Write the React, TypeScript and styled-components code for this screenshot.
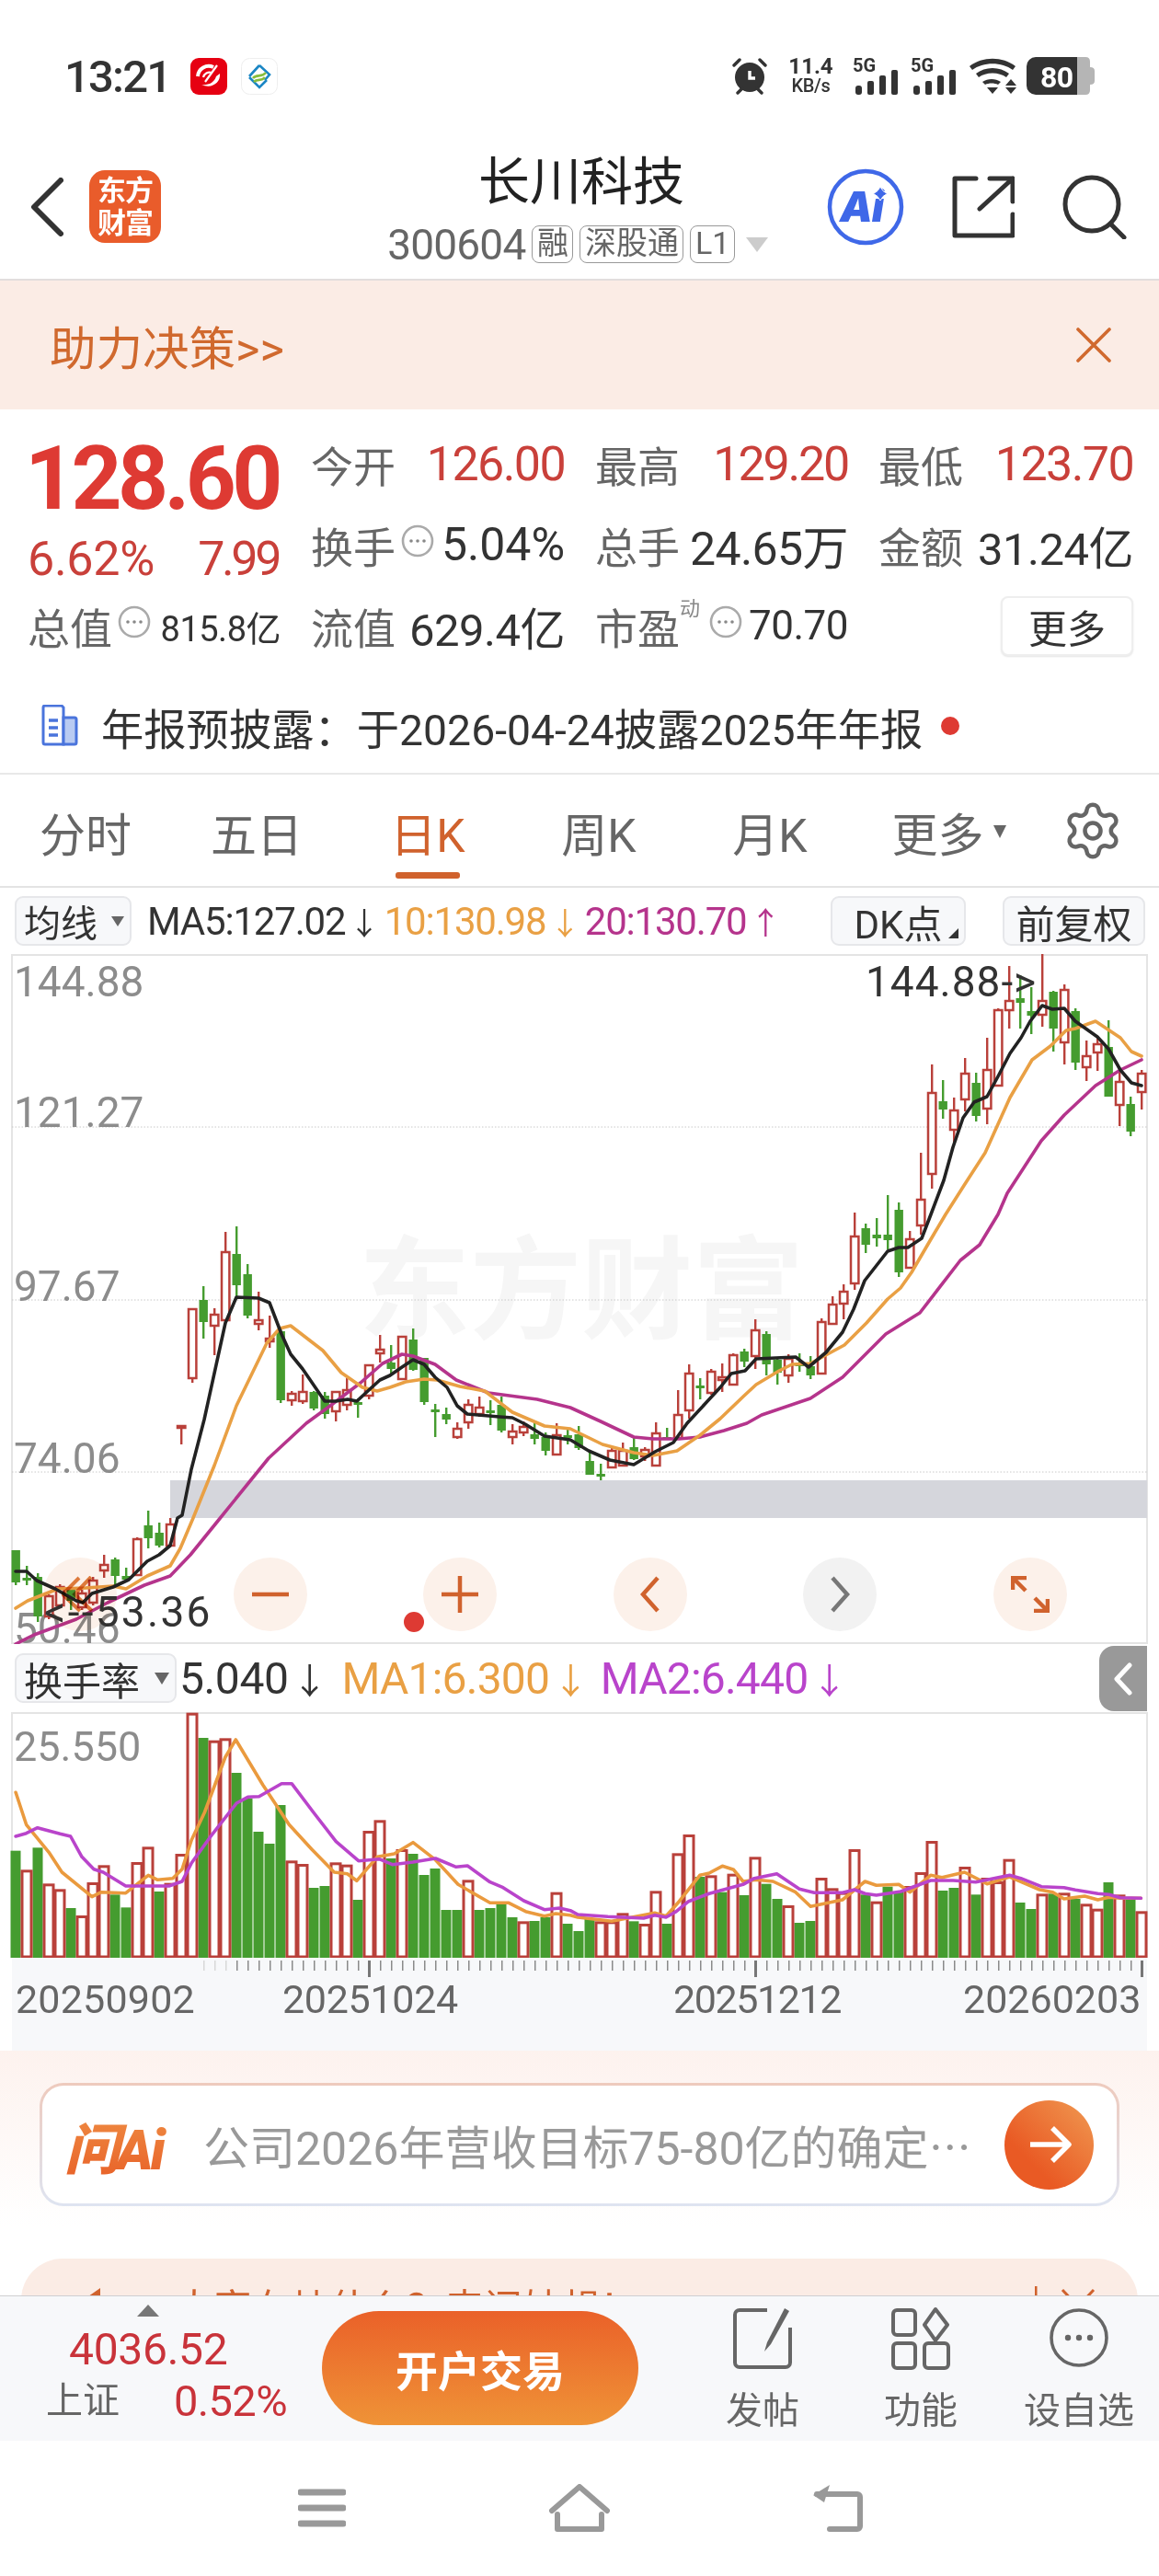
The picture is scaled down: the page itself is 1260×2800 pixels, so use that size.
import React from "react";
import styled, { createGlobalStyle } from "styled-components";
import { Settings } from "lucide-react";

const FONT = `Roboto, "Noto Sans CJK SC", sans-serif`;

const Global = createGlobalStyle`
  html, body { margin: 0; padding: 0; background: #fff; }
  * { box-sizing: border-box; }
`;

/* ---------- chart data: body top, body bottom, wick top, wick bottom (page px), colour ---------- */
type C = [number, number, number, number, "r" | "g"];
const candles: C[] = [
  [1685,1720,1685,1723,"g"],[1715,1718,1702,1723,"g"],[1714,1757,1710,1763,"g"],[1735,1757,1733,1760,"r"],
  [1725,1745,1722,1748,"r"],[1728,1740,1725,1750,"g"],[1732,1747,1728,1750,"r"],[1718,1742,1714,1745,"r"],
  [1701,1707,1690,1715,"r"],[1695,1713,1693,1723,"g"],[1713,1717,1704,1717,"g"],[1673,1712,1671,1712,"r"],
  [1658,1672,1642,1683,"g"],[1666,1680,1655,1682,"g"],[1657,1680,1650,1680,"r"],[1550,1552,1550,1570,"r"],
  [1423,1498,1423,1503,"r"],[1413,1437,1398,1455,"g"],[1429,1441,1422,1473,"r"],[1361,1435,1339,1435,"r"],
  [1363,1397,1333,1410,"g"],[1385,1430,1374,1433,"g"],[1435,1439,1404,1446,"r"],[1455,1458,1430,1465,"r"],
  [1447,1522,1445,1525,"g"],[1515,1522,1512,1528,"r"],[1513,1523,1494,1526,"r"],[1513,1531,1512,1533,"g"],
  [1517,1537,1513,1542,"g"],[1513,1534,1512,1545,"r"],[1511,1527,1498,1533,"r"],[1524,1526,1520,1541,"g"],
  [1484,1517,1484,1521,"r"],[1467,1471,1451,1481,"r"],[1481,1488,1462,1493,"g"],[1453,1499,1453,1499,"r"],
  [1456,1489,1444,1490,"g"],[1476,1524,1476,1527,"g"],[1532,1534,1526,1562,"g"],[1537,1543,1530,1548,"g"],
  [1553,1562,1546,1564,"r"],[1527,1546,1521,1553,"r"],[1530,1537,1518,1540,"r"],[1533,1536,1522,1549,"g"],
  [1527,1555,1518,1557,"g"],[1556,1562,1548,1570,"r"],[1551,1557,1545,1561,"r"],[1559,1564,1547,1570,"g"],
  [1562,1577,1557,1582,"g"],[1560,1581,1547,1581,"r"],[1560,1563,1552,1570,"g"],[1559,1574,1550,1576,"g"],
  [1588,1603,1577,1603,"g"],[1602,1604,1591,1609,"g"],[1577,1595,1574,1595,"r"],[1577,1593,1568,1593,"r"],
  [1573,1586,1563,1587,"g"],[1576,1583,1573,1588,"r"],[1558,1593,1546,1593,"r"],[1562,1564,1552,1565,"g"],
  [1538,1563,1511,1563,"r"],[1493,1533,1483,1542,"r"],[1506,1508,1498,1521,"g"],[1491,1514,1488,1516,"r"],
  [1497,1500,1482,1513,"r"],[1473,1505,1471,1505,"r"],[1469,1480,1466,1486,"g"],[1446,1474,1434,1488,"r"],
  [1450,1483,1447,1495,"g"],[1478,1492,1477,1505,"g"],[1477,1495,1472,1503,"r"],[1482,1484,1471,1491,"g"],
  [1485,1495,1474,1499,"g"],[1437,1493,1433,1493,"r"],[1418,1439,1409,1439,"r"],[1404,1417,1396,1434,"r"],
  [1344,1395,1318,1402,"r"],[1335,1353,1330,1362,"g"],[1342,1346,1324,1355,"g"],[1342,1348,1299,1358,"g"],
  [1315,1383,1307,1388,"g"],[1347,1378,1338,1378,"r"],[1304,1332,1253,1342,"r"],[1188,1276,1157,1292,"r"],
  [1197,1206,1174,1216,"g"],[1207,1228,1193,1243,"r"],[1167,1195,1150,1208,"r"],[1177,1213,1166,1219,"g"],
  [1163,1205,1128,1222,"r"],[1098,1180,1096,1180,"r"],[1088,1098,1050,1118,"r"],[1085,1090,1060,1118,"g"],
  [1099,1104,1073,1124,"g"],[1088,1103,1037,1116,"r"],[1078,1118,1077,1143,"g"],[1076,1133,1070,1157,"r"],
  [1099,1155,1096,1163,"g"],[1148,1160,1131,1175,"r"],[1135,1144,1127,1164,"r"],[1138,1192,1109,1192,"g"],
  [1176,1201,1162,1224,"r"],[1200,1230,1192,1235,"g"],[1167,1187,1163,1206,"r"],
];

const ma5 = "17,1708 29,1708 40,1718 60,1727 83,1740 90,1742 100,1732 123,1725 140,1717 160,1697 173,1690 185,1680 193,1650 198,1647 208,1597 222,1543 245,1438 257,1410 281,1411 293,1416 306,1450 316,1472 329,1488 353,1523 365,1523 378,1521 388,1523 402,1510 413,1500 424,1495 437,1486 449,1478 461,1483 473,1497 486,1508 497,1528 508,1537 543,1540 557,1541 571,1548 592,1561 620,1565 640,1577 663,1587 689,1592 712,1578 732,1568 747,1547 783,1508 795,1493 810,1490 822,1477 865,1475 879,1486 898,1470 916,1448 928,1423 940,1392 965,1360 977,1356 987,1356 1002,1346 1012,1320 1026,1283 1036,1247 1047,1215 1059,1198 1073,1192 1085,1170 1098,1145 1110,1128 1120,1110 1133,1093 1144,1097 1157,1096 1169,1110 1193,1127 1205,1140 1218,1163 1230,1177 1241,1180";
const ma10 = "17,1748 30,1740 63,1727 93,1726 123,1724 137,1727 160,1713 185,1702 196,1683 210,1650 233,1593 257,1528 290,1460 304,1444 316,1441 351,1468 371,1492 394,1508 410,1512 424,1508 441,1502 461,1499 475,1500 500,1507 527,1512 557,1535 592,1550 620,1553 655,1570 689,1579 710,1582 736,1577 761,1560 783,1542 808,1518 822,1505 847,1490 861,1483 881,1482 918,1462 942,1438 965,1412 979,1400 991,1383 1012,1347 1028,1320 1049,1287 1071,1253 1098,1193 1122,1152 1142,1137 1159,1120 1169,1118 1191,1110 1218,1128 1230,1143 1241,1148";
const ma20 = "17,1787 37,1777 83,1760 117,1742 157,1723 185,1713 207,1690 237,1653 292,1585 306,1572 333,1547 359,1528 392,1503 416,1482 437,1472 449,1474 473,1483 496,1500 531,1514 584,1521 620,1530 653,1545 689,1562 710,1564 738,1564 761,1562 787,1555 812,1547 828,1538 881,1520 916,1497 963,1450 1000,1427 1044,1370 1065,1353 1085,1320 1095,1297 1132,1240 1157,1212 1191,1180 1218,1163 1241,1152";

const volTops = [695,757,685,802,820,882,906,798,742,838,880,732,682,828,800,705,245,327,335,328,441,525,633,672,546,727,738,816,810,733,740,855,630,595,720,690,705,774,753,888,888,790,888,882,870,912,925,924,912,830,933,957,915,925,925,898,925,933,826,933,703,642,780,775,830,770,840,715,803,852,873,930,924,783,817,830,690,838,860,812,830,810,765,663,825,816,747,838,783,795,722,864,885,835,835,832,852,868,884,798,838,855,892];
const volUp = new Set([1,3,4,6,7,8,11,12,14,15,16,18,19,25,26,29,30,32,33,35,41,46,49,53,54,55,57,58,60,61,63,65,67,70,73,74,75,76,78,81,82,83,86,88,89,90,93,95,97,98,100,102]);

const pts = (a: number[][], x0: number, sx: number) =>
  a.map(([x, y]) => `${(x0 + x / sx).toFixed(1)},${(1780 + y / 3).toFixed(1)}`).join(" ");
const vol1 = pts([[42,505],[70,610],[130,700],[165,765],[245,845],[270,830],[335,833],[395,775],[420,790],[460,785],[485,755],[510,660],[545,570],[600,390],[628,333],[700,480],[770,610],[830,690],[890,765],[925,770],[950,793],[1005,715],[1050,705],[1100,668],[1160,725],[1220,805],[1305,865],[1355,865],[1400,893],[1450,908],[1480,900],[1519,905]],0,2.45)+" "+pts([[0,905],[20,912],[110,925],[225,898],[255,908],[290,860],[345,775],[370,768],[405,745],[435,757],[460,795],[495,790],[540,795],[600,830],[640,877],[725,855],[785,795],[815,808],[875,805],[905,830],[960,775],[990,782],[1050,765],[1110,803],[1170,780],[1250,822],[1285,830],[1315,852],[1370,843],[1405,855],[1435,847],[1465,850],[1520,850]],620,2.45);
const vol2 = pts([[42,648],[70,638],[100,620],[160,640],[188,648],[218,715],[250,755],[275,765],[335,810],[400,810],[450,810],[485,795],[510,735],[560,650],[630,540],[660,520],[690,518],[750,476],[777,476],[835,570],[895,665],[955,728],[1010,722],[1045,740],[1100,732],[1160,720],[1215,748],[1245,744],[1305,797],[1340,815],[1395,858],[1450,887],[1490,882],[1519,890]],0,2.45)+" "+pts([[0,890],[20,903],[100,910],[195,915],[225,905],[255,912],[280,895],[315,860],[370,835],[460,805],[490,785],[550,770],[610,820],[650,832],[725,832],[757,822],[785,835],[815,840],[880,828],[960,792],[1020,792],[1080,797],[1110,790],[1170,775],[1200,785],[1255,812],[1315,815],[1345,823],[1405,835],[1435,838],[1465,848],[1520,850]],620,2.45);

/* ---------- page ---------- */
const Page = styled.div`
  width: 1260px; height: 2800px; overflow: hidden; background: #fff;
  display: flex; flex-direction: column;
  font-family: ${FONT}; color: #333;
`;

/* status bar */
const StatusBar = styled.div`
  height: 130px; flex: none; padding: 62px 70px 0 70px;
  display: flex; justify-content: space-between; align-items: flex-start;
`;
const StatusLeft = styled.div`display: flex; align-items: center; height: 41px;`;
const Time = styled.div`font-size: 49px; font-weight: 500; letter-spacing: -1.8px; color: #333; margin-right: 22px; line-height: 41px; padding-top: 2px;`;
const AppTile = styled.div`margin-right: 15px; width: 40px; height: 40px; display: flex;`;
const StatusRight = styled.div`display: flex; align-items: center; height: 41px;`;
const NetSpeed = styled.div`
  width: 49px; margin: 0 21px 0 22px; display: flex; flex-direction: column; align-items: center;
  color: #333; font-weight: 700;
`;
const NetTop = styled.div`font-size: 24px; line-height: 21px; height: 21px;`;
const NetBottom = styled.div`font-size: 20px; line-height: 20px; height: 20px; font-weight: 500; white-space: nowrap; letter-spacing: -0.3px;`;
const StatusGap = styled.span<{ $w: number }>`width: ${(p) => p.$w}px;`;
const SignalBox = styled.div`position: relative; width: 50px; height: 41px; flex: none;`;
const SignalLabel = styled.div`position: absolute; left: 0; top: 0; font-size: 20px; line-height: 19px; font-weight: 700; color: #333;`;

/* header */
const Header = styled.div`
  height: 175px; flex: none; padding-top: 16px; border-bottom: 2px solid #e2dedd;
  display: grid; grid-template-columns: 1fr auto 1fr; align-items: center;
`;
const HeaderLeft = styled.div`display: flex; align-items: center; padding-left: 33px; gap: 28px;`;
const BrandLogo = styled.div`
  width: 78px; height: 79px; border-radius: 17px; background: #e95c2b; color: #fff;
  font-size: 31px; font-weight: 700; line-height: 35px; text-align: center; padding-top: 5px; letter-spacing: -1px;
`;
const TitleBlock = styled.div`align-self: start; margin-top: 22px; display: flex; flex-direction: column; align-items: center;`;
const StockName = styled.div`font-size: 56px; line-height: 60px; color: #222; margin-left: 4px;`;
const SubRow = styled.div`margin-top: 17px; margin-left: -4px; display: flex; align-items: center; color: #666; height: 41px;`;
const Code = styled.span`font-size: 46px; margin-right: 7px; letter-spacing: -0.8px;`;
const Tag = styled.span`
  height: 41px; border: 1.5px solid #999; border-radius: 8px; font-size: 34px; line-height: 36px; padding: 0 4.5px;
  margin-right: 7px; color: #666;
`;
const Caret = styled.span`
  display: inline-block; width: 0; height: 0; margin-left: 5px;
  border-left: 12px solid transparent; border-right: 12px solid transparent; border-top: 16px solid #ccc;
`;
const HeaderRight = styled.div`display: flex; align-items: center; justify-content: flex-end; padding-right: 35px; gap: 52px;`;

/* banner */
const Banner = styled.div`
  height: 140px; flex: none; background: #fbece5; display: flex; align-items: center; justify-content: space-between;
  padding: 0 52px 0 54px; color: #d0692e; font-size: 50.5px;
`;

/* quote */
const Quote = styled.div`height: 397px; flex: none; border-bottom: 2px solid #e8e8e8; padding-top: 15px;`;
const QuoteGrid = styled.div`
  display: grid; padding-left: 30px; grid-template-columns: 275px 276px 275px 277px; column-gap: 33px;
  grid-auto-rows: 88px; align-items: center;
`;
const PriceBlock = styled.div`grid-column: 1; grid-row: 1 / span 2; align-self: start; padding-top: 10px;`;
const Price = styled.div`font-size: 96px; font-weight: 700; line-height: 100px; color: #de3a33; letter-spacing: -4.6px; margin-left: -3px;`;
const PriceSub = styled.div`
  margin-top: 8px; display: flex; justify-content: space-between; line-height: 60px; color: #c9403a; font-size: 52px;
`;
const PctText = styled.span`letter-spacing: -0.3px;`;
const ChgText = styled.span`letter-spacing: -3.4px; margin-right: 2px;`;
const Stat = styled.div`display: flex; align-items: center;`;
const Label = styled.span`font-size: 46px; color: #666; white-space: nowrap;`;
const Value = styled.span<{ $red?: boolean; $size?: number; $track?: number }>`
  margin-left: auto; white-space: nowrap; letter-spacing: ${(p) => p.$track ?? -0.5}px;
  font-size: ${(p) => p.$size ?? 49}px; color: ${(p) => (p.$red ? "#c9403a" : "#333")};
`;
const Sup = styled.span`font-size: 22px; color: #888; align-self: flex-start; margin-top: -4px; width: 26px;`;
const DotWrap = styled.span`margin-left: 6px; margin-top: -8px; display: inline-flex; flex: none;`;
const MoreButton = styled.button`
  justify-self: end; width: 144px; height: 65px; border: 2px solid #eee; border-radius: 8px; background: #fff;
  color: #333; font: 42px ${FONT}; padding: 0; box-shadow: 0 1px 2px #e4e4e4;
`;
const Notice = styled.div`display: flex; align-items: center; padding: 12px 0 0 45px; height: 118px; font-size: 46.3px; color: #333;`;
const NoticeText = styled.span`margin-left: 25px;`;
const RedDot = styled.span`width: 20px; height: 20px; border-radius: 50%; background: #de3a33; margin-left: 20px;`;

/* tabs */
const Tabs = styled.div`
  height: 123px; flex: none; border-bottom: 2px solid #e4e4e4; padding-top: 3px;
  display: grid; grid-template-columns: repeat(6, 186px) 144px;
`;
const Tab = styled.div<{ $active?: boolean; $shift?: number }>`
  position: relative; display: flex; align-items: center; justify-content: center; font-size: 50px;
  padding-left: ${(p) => p.$shift ?? 0}px;
  color: ${(p) => (p.$active ? "#d0622d" : "#666")};
  ${(p) => p.$active && `&::after { content: ""; position: absolute; left: 58px; width: 70px; height: 7px; top: 103px; border-radius: 3px; background: #d0622d; }`}
`;
const TinyCaret = styled.span`
  display: inline-block; margin-left: 10px; width: 0; height: 0;
  border-left: 7px solid transparent; border-right: 7px solid transparent; border-top: 14px solid #666;
`;
const GearCell = styled.div`display: flex; align-items: center; justify-content: center; color: #666; margin-top: -2px;`;

/* MA rows */
const IndicatorRow = styled.div<{ $h: number }>`
  height: ${(p) => p.$h}px; flex: none; display: flex; align-items: center; padding-left: 16px; position: relative;
`;
const Pill = styled.div<{ $w: number; $h: number; $size: number }>`
  width: ${(p) => p.$w}px; height: ${(p) => p.$h}px; flex: none; background: #f7f8fa; border: 2px solid #e6e7ea; border-radius: 9px;
  display: flex; align-items: center; justify-content: space-between; padding: 0 6px 0 8px; font-size: ${(p) => p.$size}px; color: #333;
`;
const PillCaret = styled.span<{ $w: number }>`
  width: 0; height: 0; border-left: ${(p) => p.$w}px solid transparent; border-right: ${(p) => p.$w}px solid transparent;
  border-top: ${(p) => p.$w * 1.7}px solid #666;
`;
const MaText = styled.span<{ $color: string; $size: number; $left: number; $track?: number }>`
  color: ${(p) => p.$color}; font-size: ${(p) => p.$size}px; margin-left: ${(p) => p.$left}px; white-space: nowrap;
  letter-spacing: ${(p) => p.$track ?? -0.4}px;
`;
const Arrow = styled.span`font-size: 0.8em; margin-left: 4px;`;
const RowActions = styled.div`margin-left: auto; display: flex; gap: 40px; padding-right: 15px;`;
const ActionBtn = styled.div<{ $w: number }>`
  width: ${(p) => p.$w}px; height: 54px; position: relative; background: #f7f8fa; border: 2px solid #e6e7ea; border-radius: 9px;
  display: flex; align-items: center; justify-content: center; font-size: 42px; color: #333;
`;
const Corner = styled.span`
  position: absolute; right: 6px; bottom: 6px; width: 0; height: 0; border-left: 11px solid transparent; border-bottom: 11px solid #333;
`;
const SideHandle = styled.div`
  position: absolute; right: 13px; top: 2px; width: 52px; height: 71px; background: #999; border-radius: 16px 0 0 16px;
  display: flex; align-items: center; justify-content: center;
`;

/* chart */
const ChartPanel = styled.div<{ $h: number }>`position: relative; height: ${(p) => p.$h}px; flex: none;`;
const ChartSvg = styled.svg`position: relative; display: block; font-family: ${FONT};`;
const Watermark = styled.div`
  position: absolute; left: 390px; top: 302px; font-size: 121px; font-weight: 700; color: #f6f6f6; white-space: nowrap; line-height: 130px;
`;
const ZoomBar = styled.div`position: absolute; left: 47px; top: 656px; display: flex; gap: 126.6px;`;
const ZoomBtn = styled.div<{ $grey?: boolean }>`
  width: 80px; height: 80px; border-radius: 50%; display: flex; align-items: center; justify-content: center; mix-blend-mode: multiply;
  background: ${(p) => (p.$grey ? "#f2f2f2" : "#fcf1ea")};
`;
const ChartDot = styled.span`position: absolute; left: 439px; top: 715px; width: 22px; height: 22px; border-radius: 50%; background: #de3a33;`;

const AxisArea = styled.div`height: 101px; flex: none; margin: 0 13px; width: 1234px; background: #f7f8fa;`;
const AxisSvg = styled.svg`display: block; font-family: ${FONT};`;

/* ask AI */
const AiSection = styled.div`
  height: 266px; flex: none; overflow: hidden; padding-top: 35px;
  background: linear-gradient(#fdf2ee 0, #fff 190px);
`;
const AskBox = styled.div`
  margin: 0 43px; height: 134px; border: 3px solid transparent; border-radius: 26px;
  background: linear-gradient(#fff, #fff) padding-box, linear-gradient(#eecabd, #dee4f1) border-box;
  display: flex; align-items: center; padding-left: 24px;
`;
const AskLogo = styled.span`
  font-size: 60px; font-weight: 900; font-style: italic; letter-spacing: -3px; width: 128px; flex: none;
  background: linear-gradient(#ef8f45, #e85f27); -webkit-background-clip: text; background-clip: text; color: transparent;
`;
const AskText = styled.span`flex: 1; font-size: 50px; color: #999; white-space: nowrap; margin-left: 23px; display: flex; align-items: center;`;
const CjkDots = styled.span`font-family: "Noto Sans CJK SC", sans-serif; font-size: 46px;`;
const AskGo = styled.div`
  width: 97px; height: 97px; border-radius: 50%; flex: none; margin-right: 25px;
  background: linear-gradient(45deg, #e95a24 30%, #f09a52); display: flex; align-items: center; justify-content: center;
`;
const PromoCard = styled.div`
  margin: 57px 23px 0; height: 80px; border-radius: 45px 45px 0 0; background: #fbece5; color: #d0622d;
  display: flex; align-items: flex-start; padding: 30px 42px 0 52px; font-size: 42px; line-height: 50px; white-space: nowrap;
`;
const PromoText = styled.span`margin-left: 75px; flex: 1;`;

/* bottom bar */
const BottomBar = styled.div`
  height: 158px; flex: none; background: #f7f8fa; border-top: 1px solid #cfcfd2; display: flex; padding-left: 50px;
`;
const IndexBlock = styled.div`width: 262px; flex: none; display: flex; flex-direction: column; padding-top: 9px; align-items: stretch;`;
const IndexCaret = styled.span`
  align-self: center; margin-left: -40px; width: 0; height: 0;
  border-left: 12px solid transparent; border-right: 12px solid transparent; border-bottom: 13px solid #777;
`;
const IndexValue = styled.div`font-size: 48px; line-height: 56px; color: #c9333a; margin: 8px 0 0 25px; letter-spacing: -0.3px;`;
const IndexFoot = styled.div`display: flex; justify-content: space-between; align-items: center; margin-top: 1px; line-height: 54px;`;
const IndexName = styled.span`font-size: 40px; color: #666;`;
const IndexPct = styled.span`font-size: 47px; color: #c9333a; letter-spacing: -0.6px;`;
const TradeButton = styled.button`
  width: 344px; height: 124px; margin: 16px 0 0 38px; border: 0; border-radius: 62px; flex: none;
  background: linear-gradient(#ea6129, #ef9337); color: #fff; font: 700 46px ${FONT};
`;
const ToolGroup = styled.div`margin-left: 49px; display: grid; grid-template-columns: repeat(3, 172px);`;
const Tool = styled.div`display: flex; flex-direction: column; align-items: center; padding-top: 10px; color: #666; font-size: 40px;`;
const ToolLabel = styled.span`margin-top: 20px; line-height: 50px; white-space: nowrap;`;

/* nav */
const NavBar = styled.div`height: 147px; flex: none; display: flex; justify-content: center; align-items: center;`;
const NavCell = styled.div`width: 280px; display: flex; justify-content: center; margin-top: -1px;`;

/* ---------- small drawings ---------- */
const Dots = () => (
  <DotWrap>
    <svg width="36" height="36" viewBox="0 0 36 36">
      <circle cx="18" cy="18" r="16" fill="none" stroke="#aaa" strokeWidth="2.6" />
      <circle cx="11" cy="18" r="1.8" fill="#888" /><circle cx="18" cy="18" r="1.8" fill="#888" /><circle cx="25" cy="18" r="1.8" fill="#888" />
    </svg>
  </DotWrap>
);

const Signal = () => (
  <SignalBox>
    <svg width="50" height="41" viewBox="0 0 50 41">
      <rect x="3" y="31" width="7" height="10" rx="3" fill="#333" />
      <rect x="16" y="26" width="7" height="15" rx="2" fill="#333" />
      <rect x="29" y="20" width="7" height="21" rx="2" fill="#333" />
      <rect x="42" y="14" width="7" height="27" rx="2" fill="#333" />
    </svg>
    <SignalLabel>5G</SignalLabel>
  </SignalBox>
);

const Candles = () => (
  <g>
    {candles.map((c, i) => {
      const x = 17 + 12 * i;
      const [t, b, wt, wb, k] = c;
      if (k === "g")
        return (
          <g key={i} fill="#459c2f">
            <rect x={x - 1} y={wt} width={2.4} height={wb - wt} />
            <rect x={x - 4.5} y={t} width={9.4} height={Math.max(b - t, 3)} />
          </g>
        );
      return (
        <g key={i}>
          <rect x={x - 1} y={wt} width={2.4} height={Math.max(t - wt, 0)} fill="#b9403a" />
          <rect x={x - 1} y={b} width={2.4} height={Math.max(wb - b, 0)} fill="#b9403a" />
          <rect x={x - 4} y={t} width={8.4} height={Math.max(b - t, 1)} fill="#fff" stroke="#b9403a" strokeWidth={2.5} />
        </g>
      );
    })}
  </g>
);

const Poly = ({ p, c, w = 3.6 }: { p: string; c: string; w?: number }) => (
  <polyline points={p} fill="none" stroke={c} strokeWidth={w} strokeLinejoin="round" strokeLinecap="round" />
);

const Z = "#d0622d";

export default function App() {
  return (
    <Page>
      <Global />
      <StatusBar>
        <StatusLeft>
          <Time>13:21</Time>
          <AppTile>
            <svg width="40" height="40" viewBox="0 0 40 40">
              <rect width="40" height="40" rx="9" fill="#e60012" />
              <path d="M8 20a12 12 0 0 1 17-10" fill="none" stroke="#fff" strokeWidth="4" />
              <path d="M32 17c1 10-9 17-20 12 7 1 14-2 16-9z" fill="#fff" />
              <path d="M14 21a7 7 0 0 1 9-5M29 8 16 26" fill="none" stroke="#fff" strokeWidth="2.2" />
            </svg>
          </AppTile>
          <AppTile>
            <svg width="40" height="40" viewBox="0 0 40 40">
              <rect x="0.5" y="0.5" width="39" height="39" rx="9" fill="#fff" stroke="#eee" />
              <path d="M20 8 31 18 26 24M9 20l11-12M9 21l11 11 8-8" fill="none" stroke="#1a86c4" strokeWidth="2.6" />
              <path d="M13 22c4-5 9 0 14-6M14 26c4-4 8 0 12-5" fill="none" stroke="#86bc3c" strokeWidth="2.6" />
            </svg>
          </AppTile>
        </StatusLeft>
        <StatusRight>
          <svg width="40" height="41" viewBox="0 0 40 41">
            <circle cx="20" cy="22" r="16" fill="#333" />
            <path d="M3 9 9 3M37 9l-6-6M7 39l5-5M33 39l-5-5" stroke="#333" strokeWidth="3.4" strokeLinecap="round" />
            <path d="M20 15v8h6" fill="none" stroke="#fff" strokeWidth="3.4" />
          </svg>
          <NetSpeed>
            <NetTop>11.4</NetTop>
            <NetBottom>KB/s</NetBottom>
          </NetSpeed>
          <Signal />
          <StatusGap $w={13} />
          <Signal />
          <StatusGap $w={13} />
          <svg width="52" height="41" viewBox="0 0 52 41">
            <path d="M1 10c14-11 36-11 50 0l-3 4C36 5 16 5 4 14z" fill="#333" />
            <path d="M8 18c10-8 26-8 36 0l-3 4c-8-6-22-6-30 0z" fill="#333" />
            <path d="M15 27c6-4 14-4 20 0l-3 3c-4-2-10-2-14 0z" fill="#333" />
            <path d="M20 33h12l-6 7zM40 31l6-7 6 7zM40 33h12l-6 7z" fill="#333" />
          </svg>
          <StatusGap $w={11} />
          <svg width="74" height="41" viewBox="0 0 74 41">
            <path d="M10 0h45v41H10A10 10 0 0 1 0 31V10A10 10 0 0 1 10 0z" fill="#333" />
            <path d="M55 0h9q5 0 5 5v6q5 0 5 4v11q0 4-5 4v6q0 5-5 5h-9z" fill="#b5b5b5" />
            <text x="15" y="33" fontFamily="Roboto" fontWeight="700" fontSize="32" fill="#fff" letterSpacing="-0.5">80</text>
          </svg>
        </StatusRight>
      </StatusBar>

      <Header>
        <HeaderLeft>
          <svg width="36" height="64" viewBox="0 0 36 64">
            <path d="M33 3 4 32l29 29" fill="none" stroke="#333" strokeWidth="6" strokeLinecap="round" strokeLinejoin="round" />
          </svg>
          <BrandLogo>东方<br />财富</BrandLogo>
        </HeaderLeft>
        <TitleBlock>
          <StockName>长川科技</StockName>
          <SubRow>
            <Code>300604</Code>
            <Tag>融</Tag>
            <Tag>深股通</Tag>
            <Tag>L1</Tag>
            <Caret />
          </SubRow>
        </TitleBlock>
        <HeaderRight>
          <svg width="84" height="84" viewBox="0 0 84 84">
            <circle cx="42" cy="42" r="39" fill="none" stroke="#3f68e8" strokeWidth="4.5" />
            <text x="14" y="58" fontFamily="Inter" fontWeight="900" fontStyle="italic" fontSize="45" fill="#3f68e8" letterSpacing="-1">Ai</text>
            <path d="M58 20l3 4.5 4.5 3-4.5 3-3 4.5-3-4.5-4.5-3 4.5-3z" fill="#3f68e8" stroke="#fff" strokeWidth="1" />
          </svg>
          <svg width="68" height="68" viewBox="0 0 68 68">
            <path d="M26 3H3v62h63V42M41 3h25v25M30 36 66 3" fill="none" stroke="#333" strokeWidth="5" strokeLinecap="round" strokeLinejoin="round" />
          </svg>
          <svg width="70" height="70" viewBox="0 0 70 70">
            <circle cx="32" cy="32" r="29" fill="none" stroke="#333" strokeWidth="5" />
            <path d="M52 53 67 68" stroke="#333" strokeWidth="5" strokeLinecap="round" />
          </svg>
        </HeaderRight>
      </Header>

      <Banner>
        <span>助力决策&gt;&gt;</span>
        <svg width="38" height="38" viewBox="0 0 38 38">
          <path d="M2 2l34 34M36 2 2 36" stroke="#d0692e" strokeWidth="3.6" strokeLinecap="round" />
        </svg>
      </Banner>

      <Quote>
        <QuoteGrid>
          <PriceBlock>
            <Price>128.60</Price>
            <PriceSub>
              <PctText>6.62%</PctText>
              <ChgText>7.99</ChgText>
            </PriceSub>
          </PriceBlock>
          <Stat><Label>今开</Label><Value $red $size={52} $track={-1.6}>126.00</Value></Stat>
          <Stat><Label>最高</Label><Value $red $size={52} $track={-2.2}>129.20</Value></Stat>
          <Stat><Label>最低</Label><Value $red $size={52} $track={-1.6}>123.70</Value></Stat>
          <Stat><Label>换手</Label><Dots /><Value $size={50} $track={0}>5.04%</Value></Stat>
          <Stat><Label>总手</Label><Value $size={50} $track={-0.6}>24.65万</Value></Stat>
          <Stat><Label>金额</Label><Value>31.24亿</Value></Stat>
          <Stat><Label>总值</Label><Dots /><Value $size={38}>815.8亿</Value></Stat>
          <Stat><Label>流值</Label><Value $size={49}>629.4亿</Value></Stat>
          <Stat><Label>市盈</Label><Sup>动</Sup><Dots /><Value $size={44}>70.70</Value></Stat>
          <MoreButton>更多</MoreButton>
        </QuoteGrid>
        <Notice>
          <svg width="40" height="46" viewBox="0 0 40 46">
            <path d="M2 3a2 2 0 0 1 2-2h18l2 2v40H4a2 2 0 0 1-2-2z" fill="none" stroke="#4a74dc" strokeWidth="3" />
            <path d="M24 14h12a2 2 0 0 1 2 2v25a2 2 0 0 1-2 2H24z" fill="#b9cbf2" stroke="#4a74dc" strokeWidth="3" />
            <path d="M8 17h10M8 25h10M8 33h10" stroke="#4a74dc" strokeWidth="3.4" />
          </svg>
          <NoticeText>年报预披露：于2026-04-24披露2025年年报</NoticeText>
          <RedDot />
        </Notice>
      </Quote>

      <Tabs>
        <Tab>分时</Tab>
        <Tab>五日</Tab>
        <Tab $active>日K</Tab>
        <Tab>周K</Tab>
        <Tab>月K</Tab>
        <Tab $shift={17}>更多<TinyCaret /></Tab>
        <GearCell><Settings size={68} strokeWidth={1.6} /></GearCell>
      </Tabs>

      <IndicatorRow $h={72}>
        <Pill $w={127} $h={54} $size={40}>均线<PillCaret $w={7} /></Pill>
        <MaText $color="#333" $size={42} $left={17} $track={-1.2}>MA5:127.02<Arrow>↓</Arrow></MaText>
        <MaText $color="#e9a044" $size={42} $left={6} $track={-1.2}>10:130.98<Arrow>↓</Arrow></MaText>
        <MaText $color="#b5348c" $size={42} $left={6} $track={-1.2}>20:130.70<Arrow>↑</Arrow></MaText>
        <RowActions>
          <ActionBtn $w={147}>DK点<Corner /></ActionBtn>
          <ActionBtn $w={155}>前复权</ActionBtn>
        </RowActions>
      </IndicatorRow>

      <ChartPanel $h={750}>
        <Watermark>东方财富</Watermark>
        <ChartSvg width="1260" height="750" viewBox="0 1037 1260 750">
          <rect x="13" y="1038" width="1234" height="748" fill="none" stroke="#e4e4e4" strokeWidth="2" />
          {[1225, 1413, 1600].map((y) => (
            <line key={y} x1="13" x2="1247" y1={y} y2={y} stroke="#c8c8c8" strokeWidth="1" strokeDasharray="1.5 2" />
          ))}
          <rect x="185" y="1609" width="1062" height="41" fill="#d5d6dc" />
          <g fontSize="46" fill="#8c8c8c">
            <text x="15" y="1083">144.88</text>
            <text x="15" y="1225">121.27</text>
            <text x="15" y="1414">97.67</text>
            <text x="15" y="1601">74.06</text>
            <text x="15" y="1786">50.46</text>
          </g>
          <Candles />
          <Poly p={ma20} c="#b5348c" />
          <Poly p={ma10} c="#e9a044" />
          <Poly p={ma5} c="#222" />
          <g fontSize="46" fill="#333">
            <text x="941" y="1083" letterSpacing="1">144.88-&gt;</text>
            <text x="48" y="1768" letterSpacing="2.3">&lt;--53.36</text>
          </g>
        </ChartSvg>
        <ZoomBar>
          <ZoomBtn>
            <svg width="40" height="40" viewBox="0 0 40 40"><path d="M19 2 1 20l19 18M32 1 14 20l19 18" fill="none" stroke="#dd7a3c" strokeWidth="4" /></svg>
          </ZoomBtn>
          <ZoomBtn>
            <svg width="40" height="6" viewBox="0 0 40 6"><path d="M0 3h40" stroke={Z} strokeWidth="4.5" /></svg>
          </ZoomBtn>
          <ZoomBtn>
            <svg width="40" height="40" viewBox="0 0 40 40"><path d="M0 20h40M20 0v40" stroke={Z} strokeWidth="4.5" /></svg>
          </ZoomBtn>
          <ZoomBtn>
            <svg width="22" height="40" viewBox="0 0 22 40"><path d="M19 2 3 20l16 18" fill="none" stroke={Z} strokeWidth="4.5" /></svg>
          </ZoomBtn>
          <ZoomBtn $grey>
            <svg width="22" height="40" viewBox="0 0 22 40"><path d="M3 2l16 18L3 38" fill="none" stroke="#777" strokeWidth="4.5" /></svg>
          </ZoomBtn>
          <ZoomBtn>
            <svg width="42" height="40" viewBox="0 0 42 40"><path d="M2 15V2h15M2 2l14 14M40 25v13H25M40 38 26 24" fill="none" stroke={Z} strokeWidth="4.5" /></svg>
          </ZoomBtn>
        </ZoomBar>
        <ChartDot />
      </ChartPanel>

      <IndicatorRow $h={74}>
        <Pill $w={176} $h={54} $size={42}>换手率<PillCaret $w={8} /></Pill>
        <MaText $color="#333" $size={48} $left={3}>5.040<Arrow>↓</Arrow></MaText>
        <MaText $color="#e9a044" $size={48} $left={16} $track={-0.8}>MA1:6.300<Arrow>↓</Arrow></MaText>
        <MaText $color="#b944cb" $size={48} $left={14} $track={-0.8}>MA2:6.440<Arrow>↓</Arrow></MaText>
        <SideHandle>
          <svg width="20" height="36" viewBox="0 0 20 36"><path d="M17 3 3 18l14 15" fill="none" stroke="#fff" strokeWidth="5" strokeLinecap="round" strokeLinejoin="round" /></svg>
        </SideHandle>
      </IndicatorRow>

      <ChartPanel $h={267}>
        <ChartSvg width="1260" height="267" viewBox="0 1861 1260 267">
          <path d="M13 2128V1862H1247V2128" fill="none" stroke="#e4e4e4" strokeWidth="2" />
          <text x="15" y="1914" fontSize="45" fill="#8c8c8c">25.550</text>
          {volTops.map((z, i) =>
            volUp.has(i) ? null : (
              <rect key={i} x={17 + 12 * i - 5.5} y={1780 + z / 3} width={11} height={2128 - 1780 - z / 3} fill="#459c2f" />
            ),
          )}
          {volTops.map((z, i) =>
            volUp.has(i) ? (
              <rect key={i} x={17 + 12 * i - 5} y={1781.5 + z / 3} width={10} height={2127 - 1781.5 - z / 3} fill="#fff" stroke="#b9403a" strokeWidth="3" />
            ) : null,
          )}
          <Poly p={vol1} c="#ea9a3e" />
          <Poly p={vol2} c="#b944cb" />
        </ChartSvg>
      </ChartPanel>

      <AxisArea>
        <AxisSvg width="1234" height="101" viewBox="13 2128 1234 101">
          {Array.from({ length: 86 }).map((_, k) => {
            const x = 221 + 12 * k;
            const big = x === 401 || x === 821 || x === 1241;
            return (
              <rect key={x} x={big ? x - 1 : x} y="2131" width={big ? 3 : 1.5} height={big ? 18 : 11} fill={k < 3 ? "#d8d8d8" : big ? "#777" : "#8a8a8a"} />
            );
          })}
          <g fontSize="43" fill="#666">
            <text x="17" y="2188" letterSpacing="0.2">20250902</text>
            <text x="307" y="2188" letterSpacing="-0.3">20251024</text>
            <text x="732" y="2188" letterSpacing="-1.4">20251212</text>
            <text x="1047" y="2188">20260203</text>
          </g>
        </AxisSvg>
      </AxisArea>

      <AiSection>
        <AskBox>
          <AskLogo>问Ai</AskLogo>
          <AskText>公司2026年营收目标75-80亿的确定<CjkDots>…</CjkDots></AskText>
          <AskGo>
            <svg width="48" height="48" viewBox="0 0 48 48"><path d="M3 24h40M27 6l18 18-18 18" fill="none" stroke="#fff" strokeWidth="5.5" strokeLinejoin="round" /></svg>
          </AskGo>
        </AskBox>
        <PromoCard>
          <svg width="40" height="40" viewBox="0 0 40 40"><path d="M2 16h12L34 2v38L14 28H2z" fill="#d0622d" /></svg>
          <PromoText>大家在炒什么？来问妙想！</PromoText>
          <svg width="70" height="40" viewBox="0 0 70 40"><path d="M1 0v40M30 4l17 18L64 4" fill="none" stroke="#d0622d" strokeWidth="3" /></svg>
        </PromoCard>
      </AiSection>

      <BottomBar>
        <IndexBlock>
          <IndexCaret />
          <IndexValue>4036.52</IndexValue>
          <IndexFoot>
            <IndexName>上证</IndexName>
            <IndexPct>0.52%</IndexPct>
          </IndexFoot>
        </IndexBlock>
        <TradeButton>开户交易</TradeButton>
        <ToolGroup>
          <Tool>
            <svg width="66" height="70" viewBox="0 0 66 70">
              <path d="M38 5H8a5 5 0 0 0-5 5v52a5 5 0 0 0 5 5h50a5 5 0 0 0 5-5V24" fill="none" stroke="#666" strokeWidth="4" />
              <path d="M57 3 38 40l-3 10 7-8L62 6z" fill="#666" />
            </svg>
            <ToolLabel>发帖</ToolLabel>
          </Tool>
          <Tool>
            <svg width="66" height="70" viewBox="0 0 66 70">
              <rect x="3" y="5" width="24" height="27" rx="4" fill="none" stroke="#666" strokeWidth="4" />
              <path d="M49 4 62 21 49 38 37 21z" fill="none" stroke="#666" strokeWidth="4" strokeLinejoin="round" />
              <rect x="3" y="41" width="24" height="27" rx="4" fill="none" stroke="#666" strokeWidth="4" />
              <rect x="37" y="41" width="26" height="27" rx="4" fill="none" stroke="#666" strokeWidth="4" />
            </svg>
            <ToolLabel>功能</ToolLabel>
          </Tool>
          <Tool>
            <svg width="66" height="70" viewBox="0 0 66 70">
              <circle cx="33" cy="35" r="30" fill="none" stroke="#666" strokeWidth="3.6" />
              <circle cx="21" cy="35" r="3.2" fill="#666" /><circle cx="33" cy="35" r="3.2" fill="#666" /><circle cx="45" cy="35" r="3.2" fill="#666" />
            </svg>
            <ToolLabel>设自选</ToolLabel>
          </Tool>
        </ToolGroup>
      </BottomBar>

      <NavBar>
        <NavCell>
          <svg width="52" height="42" viewBox="0 0 52 42"><path d="M3 4h46M3 21h46M3 38h46" stroke="#999" strokeWidth="7" strokeLinecap="round" /></svg>
        </NavCell>
        <NavCell>
          <svg width="66" height="52" viewBox="0 0 66 52"><path d="M3 29 33 3l30 26M9 33v16h48V33" fill="none" stroke="#999" strokeWidth="6" strokeLinejoin="round" strokeLinecap="round" /></svg>
        </NavCell>
        <NavCell>
          <svg width="56" height="52" viewBox="0 0 56 52"><path d="M6 11h44a3 3 0 0 1 3 3v32a3 3 0 0 1-3 3H20" fill="none" stroke="#999" strokeWidth="6" strokeLinecap="round" /><path d="M20 1 2 12l12 8z" fill="#999" /></svg>
        </NavCell>
      </NavBar>
    </Page>
  );
}
